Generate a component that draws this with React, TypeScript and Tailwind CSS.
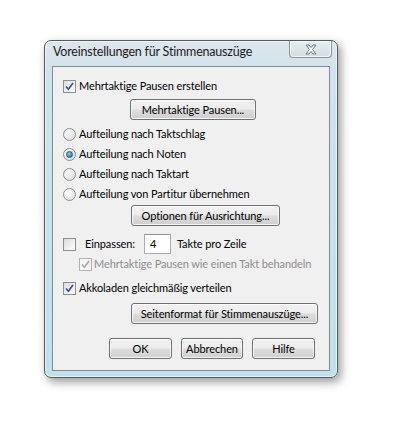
import React from "react";

const font = "font-['Lato','Open_Sans',sans-serif]";

const Btn = ({ label, w }: { label: string; w: string }) => (
    <button
        className={`${w} h-[21px] rounded-[3px] border border-[#707070] bg-[linear-gradient(#f2f2f2_0%,#ebebeb_48%,#dddddd_52%,#cfcfcf_100%)] shadow-[inset_0_0_0_1px_rgba(255,255,255,0.8)] text-[11px] tracking-[-0.1px] text-black leading-none whitespace-nowrap flex items-center justify-center`}
    >
        {label}
    </button>
);

const Check = ({ checked, disabled }: { checked?: boolean; disabled?: boolean }) => (
    <span
        className={`w-[13px] h-[13px] border flex items-center justify-center shrink-0 ${disabled ? "border-[#b1b1b1] bg-[#f4f4f4]" : "border-[#8e8f8f] bg-[linear-gradient(135deg,#dcdcdc,#ffffff)]"}`}
    >
        {checked && (
            <svg width="9" height="9" viewBox="0 0 9 9">
                <path
                    d="M1 4.5 L3.4 7.2 L8 1"
                    fill="none"
                    stroke={disabled ? "#a8a8a8" : "#3a4f8a"}
                    strokeWidth="1.7"
                />
            </svg>
        )}
    </span>
);

const Radio = ({ checked }: { checked?: boolean }) => (
    <span className="w-[13px] h-[13px] rounded-full border border-[#8e8f8f] bg-[radial-gradient(circle_at_35%_35%,#ffffff,#d6d6d6)] flex items-center justify-center shrink-0">
        {checked && (
            <span className="w-[7px] h-[7px] rounded-full bg-[radial-gradient(circle_at_40%_35%,#8fd0f5,#1c5f9c)] border border-[#1e4f7c]" />
        )}
    </span>
);

export default function App() {
    return (
        <div className={`min-h-[447px] bg-white pl-[44px] pt-[40px] ${font}`}>
            <div className="w-[294px] h-[338px] rounded-[7px] border border-[#4f5a63] bg-[linear-gradient(#dfe6eb_0%,#cfe3ea_10%,#bfe1ea_100%)] shadow-[3px_4px_10px_rgba(0,0,0,0.4),inset_0_0_0_1px_rgba(255,255,255,0.6)] flex flex-col px-[7px] pb-[6px]">
                <div className="h-[25px] flex items-start justify-between">
                    <span className="text-[12.5px] tracking-[-0.2px] text-[#1b1b1b] leading-none whitespace-nowrap pt-[5px] pl-[1px]">
                        Voreinstellungen für Stimmenauszüge
                    </span>
                    <div className="w-[43px] h-[17px] mr-[-2px] rounded-b-[4px] border border-t-0 border-[#8a959e] bg-[linear-gradient(#e8eef2,#d3dde3)] shadow-[inset_0_0_0_1px_rgba(255,255,255,0.7)] flex items-center justify-center shrink-0">
                        <svg width="14" height="11" viewBox="0 0 14 11">
                            <path
                                d="M2 1 L5 1 L7 3.5 L9 1 L12 1 L8.6 5.5 L12 10 L9 10 L7 7.5 L5 10 L2 10 L5.4 5.5 Z"
                                fill="#f4f6f7"
                                stroke="#6e7b86"
                                strokeWidth="1"
                            />
                        </svg>
                    </div>
                </div>
                <div className="flex-1 border border-[#7d8c98] bg-[#f0f0f0] text-[11px] tracking-[-0.1px] text-black whitespace-nowrap flex flex-col pl-[10px] pr-[14px]">
                    <div className="h-[20px] mt-[9px] flex items-center gap-[3px]">
                        <Check checked />
                        <span>Mehrtaktige Pausen erstellen</span>
                    </div>
                    <div className="mt-[3px] pl-[67px]">
                        <Btn label="Mehrtaktige Pausen..." w="w-[126px]" />
                    </div>
                    <div className="mt-[4px] flex flex-col">
                        {[
                            "Aufteilung nach Taktschlag",
                            "Aufteilung nach Noten",
                            "Aufteilung nach Taktart",
                            "Aufteilung von Partitur übernehmen",
                        ].map((t, i) => (
                            <div key={t} className="h-[20px] flex items-center gap-[3px]">
                                <Radio checked={i == 1} />
                                <span>{t}</span>
                            </div>
                        ))}
                    </div>
                    <div className="mt-[1px] pl-[68px]">
                        <Btn label="Optionen für Ausrichtung..." w="w-[149px]" />
                    </div>
                    <div className="h-[20px] mt-[8px] flex items-center">
                        <Check />
                        <span className="ml-[9px]">Einpassen:</span>
                        <span className="ml-[9px] w-[27px] h-[20px] bg-white border border-[#abadb3] border-t-[#8d9199] pl-[5px] flex items-center">
                            4
                        </span>
                        <span className="ml-[6px]">Takte pro Zeile</span>
                    </div>
                    <div className="h-[20px] pl-[16px] flex items-center gap-[2px] text-[#8d8d8d]">
                        <Check checked disabled />
                        <span>Mehrtaktige Pausen wie einen Takt behandeln</span>
                    </div>
                    <div className="h-[20px] mt-[4px] flex items-center gap-[3px]">
                        <Check checked />
                        <span>Akkoladen gleichmäßig verteilen</span>
                    </div>
                    <div className="mt-[5px] pl-[68px]">
                        <Btn label="Seitenformat für Stimmenauszüge..." w="w-[187px]" />
                    </div>
                    <div className="mt-[14px] flex justify-end gap-[9px]">
                        <Btn label="OK" w="w-[63px]" />
                        <Btn label="Abbrechen" w="w-[62px]" />
                        <Btn label="Hilfe" w="w-[63px]" />
                    </div>
                </div>
            </div>
        </div>
    );
}
